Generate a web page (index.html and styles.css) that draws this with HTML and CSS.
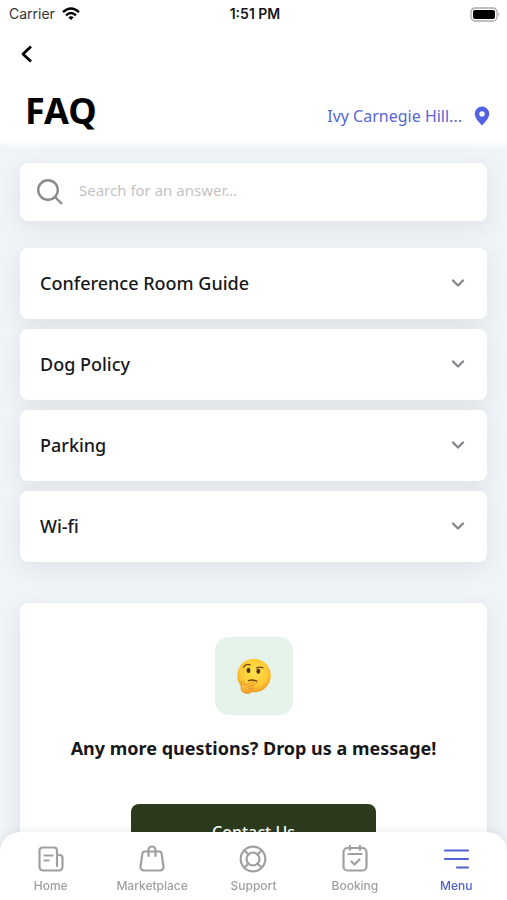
FILE: index.html
```html
<!DOCTYPE html>
<html lang="en">
<head>
<meta charset="utf-8">
<meta name="viewport" content="width=device-width, initial-scale=1">
<title>FAQ</title>
<link rel="stylesheet" href="styles.css">
</head>
<body>
<div class="app">
  <header class="header">
    <div class="status">
      <span class="carrier">Carrier
        <svg width="18" height="14" viewBox="0 0 18 14" fill="none" stroke="#000" stroke-width="2.4" aria-hidden="true"><path d="M1 5.1Q9-2.3 17 5.1M4 8.3Q9 3.6 14 8.3"/><path d="M6.3 10.3Q9 8 11.7 10.3L9 13Z" fill="#000" stroke="none"/></svg>
      </span>
      <span class="time">1:51 PM</span>
      <svg class="battery" width="31" height="15" viewBox="0 0 31 15" aria-hidden="true"><rect x="1" y="1" width="26" height="13" rx="4" fill="#fff" stroke="#aaa" stroke-width="1.3"/><rect x="3" y="3" width="22" height="9" rx="2" fill="#000"/><path d="M28.5 5.3Q30.5 7.5 28.5 9.7Z" fill="#aaa"/></svg>
    </div>
    <button class="back" type="button" aria-label="Back"><svg width="14" height="20" viewBox="0 0 14 20" fill="none" stroke="#000" stroke-width="2.8" stroke-linejoin="round"><path d="M11 2.5L3 10l8 7.5"/></svg></button>
    <div class="heading">
      <h1>FAQ</h1>
      <a class="location" href="#location">Ivy Carnegie Hill...
        <svg width="16" height="20" viewBox="0 0 16 20" aria-hidden="true"><path fill="#5163e3" fill-rule="evenodd" d="M8 .5a7.3 7.3 0 0 0-7.3 7.3C.7 13 8 19.500 8 19.500S15.300 13 15.300 7.800A7.300 7.300 0 0 0 8 .5Zm0 4.700a2.700 2.700 0 1 1 0 5.400a2.700 2.700 0 0 1 0-5.400Z"/></svg>
      </a>
    </div>
  </header>
  <main class="content">
    <label class="search card">
      <svg width="28" height="28" viewBox="0 0 28 28" fill="none" stroke="#8b8b8d" stroke-width="2.4" aria-hidden="true"><circle cx="12" cy="12" r="9.800"/><path d="M19 19l7 7"/></svg>
      <input type="text" aria-label="Search for an answer" placeholder="Search for an answer...">
    </label>
    <div class="topics">
      <button class="topic card" type="button">Conference Room Guide<svg width="14" height="10" viewBox="0 0 14 10"><path d="M2 2.500L7 7.500 12 2.500"/></svg></button>
      <button class="topic card" type="button">Dog Policy<svg width="14" height="10" viewBox="0 0 14 10"><path d="M2 2.500L7 7.500 12 2.500"/></svg></button>
      <button class="topic card" type="button">Parking<svg width="14" height="10" viewBox="0 0 14 10"><path d="M2 2.500L7 7.500 12 2.500"/></svg></button>
      <button class="topic card" type="button">Wi-fi<svg width="14" height="10" viewBox="0 0 14 10"><path d="M2 2.500L7 7.500 12 2.500"/></svg></button>
    </div>
    <section class="contact card">
      <div class="emoji">
        <svg width="36" height="36" viewBox="0 0 36 36" role="img" aria-label="Thinking face">
          <defs>
            <radialGradient id="face" cx=".5" cy=".4" r=".62"><stop offset="0" stop-color="#ffe04f"/><stop offset=".65" stop-color="#fecb35"/><stop offset="1" stop-color="#ee9820"/></radialGradient>
            <linearGradient id="hand" x2="0" y2="1"><stop offset="0" stop-color="#ffc943"/><stop offset="1" stop-color="#f39f2b"/></linearGradient>
          </defs>
          <circle cx="18" cy="17.500" r="16.800" fill="url(#face)"/>
          <g fill="#54330f"><ellipse cx="12.500" cy="12.400" rx="1.900" ry="2.600"/><ellipse cx="22.300" cy="13.200" rx="1.900" ry="2.600"/></g>
          <g fill="none" stroke="#71450f" stroke-linecap="round" stroke-width="1.300"><path d="M7.500 9.200q2.500-4 6.800-2.200M20.500 10q3-1.500 6.500-.2M12.500 22.600q4-1.500 8.500.6"/></g>
          <path d="M5.500 24c1.300-1.100 2.700-.3 2.800 1.200l.2 1.500c3.500-.2 7-3 11-3.200 1.600 0 1.800 1.900.3 2.400l-3.800 1.300c1.700.5 1.600 2 .7 2.700.6 1 .2 2-.7 2.500-.2 3-4.500 3.600-7 2.700-3.600-.9-4.500-3.900-3.700-7z" fill="url(#hand)" stroke="#dc8720" stroke-width=".7"/>
          <path d="M11.500 28.500l4.500-1M12.500 31l3.500-.6" fill="none" stroke="#d78320" stroke-width=".7"/>
        </svg>
      </div>
      <h2>Any more questions? Drop us a message!</h2>
      <button class="message" type="button">Contact Us</button>
    </section>
  </main>
  <nav class="tabs">
    <a href="#home"><svg viewBox="0 0 28 28"><path d="M20 21V5.500a3 3 0 0 0-3-3H5.500a3 3 0 0 0-3 3V22a3.500 3.500 0 0 0 3.500 3.500h16a3.500 3.500 0 0 0 3.500-3.500V13a3 3 0 0 0-3-3h-2.500M7.500 10.500h8M7.500 15.500h4"/></svg>Home</a>
    <a href="#marketplace"><svg viewBox="0 0 28 28"><path d="M6.500 6.500h15a2 2 0 0 1 2 1.600l2 13.400a3.500 3.500 0 0 1-3.500 4H6a3.500 3.500 0 0 1-3.500-4l2-13.400a2 2 0 0 1 2-1.600ZM10.500 11V5a3.500 3.500 0 0 1 7 0V11"/></svg>Marketplace</a>
    <a href="#support"><svg viewBox="0 0 28 28"><circle cx="14" cy="14" r="12.300"/><circle cx="14" cy="14" r="6.500"/><path d="M5.500 5.500l4 4M18.500 9.500l4-4M5.500 22.500l4-4M18.500 18.500l4 4"/></svg>Support</a>
    <a href="#booking"><svg viewBox="0 0 28 28"><rect x="2.500" y="3" width="23" height="22.500" rx="4"/><path d="M9 1v4M19 1v4M7.500 9h13M10.500 16.500l3 3 5-5"/></svg>Booking</a>
    <a class="active" href="#menu" aria-current="page"><svg viewBox="0 0 28 28"><path d="M3 5.500h23M3 14h23M15 22.500H26"/></svg>Menu</a>
  </nav>
</div>
</body>
</html>
```
FILE: styles.css
```css
* {
  box-sizing: border-box;
}

body {
  margin: 0;
  background: #eff4f8;
  color: #17181b;
  font-family: "Noto Sans", "Open Sans", sans-serif;
}

button {
  border: 0;
  font: inherit;
  color: inherit;
  cursor: pointer;
}

a {
  text-decoration: none;
}

svg {
  flex: none;
}

.app {
  display: flex;
  flex-direction: column;
  height: 100vh;
  overflow: hidden;
}

.header {
  position: relative;
  z-index: 1;
  flex: none;
  background: #fff;
  box-shadow: 0 0 6px 3px #fff;
}

.status {
  display: grid;
  grid-template-columns: 1fr auto 1fr;
  align-items: center;
  height: 28px;
  padding: 0 6px 0 9px;
  font: 14px/28px Inter, sans-serif;
}

.carrier {
  display: flex;
  align-items: center;
  gap: 7px;
  color: #333;
}

.time {
  font-weight: 600;
}

.battery {
  justify-self: end;
}

.back {
  display: flex;
  align-items: center;
  height: 52px;
  padding: 0 20px;
  background: none;
}

.heading {
  display: flex;
  align-items: center;
  justify-content: space-between;
  height: 62px;
  padding: 0 17px 0 25px;
}

h1 {
  margin: 0;
  color: #000;
  font-size: 36px;
  line-height: 62px;
  font-weight: 700;
}

.location {
  display: flex;
  align-items: center;
  gap: 12px;
  padding-top: 10px;
  color: #5966d5;
  font-size: 16px;
}

.content {
  flex: 1;
  min-height: 0;
  padding: 21px 20px 0;
  overflow-y: auto;
  scrollbar-width: none;
}

.card {
  border-radius: 8px;
  background: #fff;
  box-shadow: 0 6px 22px rgba(70, 50, 50, 0.09);
}

.search {
  display: flex;
  align-items: center;
  gap: 15px;
  height: 58px;
  padding: 0 17px 0 16px;
}

.search input {
  flex: 1;
  min-width: 0;
  padding: 0 0 4px;
  border: 0;
  outline: 0;
  background: none;
  font: inherit;
  font-size: 15px;
}

.search input::placeholder {
  color: #c3c3c3;
}

.topics {
  display: flex;
  flex-direction: column;
  gap: 10px;
  margin: 27px 0 41px;
}

.topic {
  display: flex;
  align-items: center;
  justify-content: space-between;
  height: 71px;
  padding: 0 22px 2px 20px;
  font-size: 18px;
  font-weight: 500;
}

.topic svg {
  fill: none;
  stroke: #85868e;
  stroke-width: 2.3;
  stroke-linecap: round;
  stroke-linejoin: round;
}

.contact {
  display: flex;
  flex-direction: column;
  align-items: center;
  padding: 34px 20px 120px;
}

.emoji {
  display: grid;
  place-items: center;
  width: 78px;
  height: 78px;
  border-radius: 14px;
  background: #e6f3eb;
}

h2 {
  margin: 19px 0 42px;
  font-size: 18px;
  line-height: 28px;
  font-weight: 700;
  text-align: center;
}

.message {
  width: 245px;
  max-width: 100%;
  height: 56px;
  border-radius: 8px;
  background: #2c3b1e;
  color: #fff;
  font-size: 16px;
  font-weight: 500;
}

.tabs {
  position: fixed;
  right: 0;
  bottom: 0;
  left: 0;
  z-index: 2;
  display: grid;
  grid-template-columns: repeat(5, 1fr);
  height: 68px;
  padding-top: 13px;
  border-radius: 20px 20px 0 0;
  background: #fff;
  box-shadow: 0 0 10px rgba(0, 0, 0, 0.1);
}

.tabs a {
  display: flex;
  flex-direction: column;
  align-items: center;
  gap: 5px;
  color: #a0a0a0;
  font: 500 12px/16px Inter, sans-serif;
}

.tabs svg {
  width: 28px;
  height: 28px;
  fill: none;
  stroke: currentColor;
  stroke-width: 2.2;
  stroke-linecap: round;
  stroke-linejoin: round;
}

.tabs .active {
  color: #5061d2;
}
```
